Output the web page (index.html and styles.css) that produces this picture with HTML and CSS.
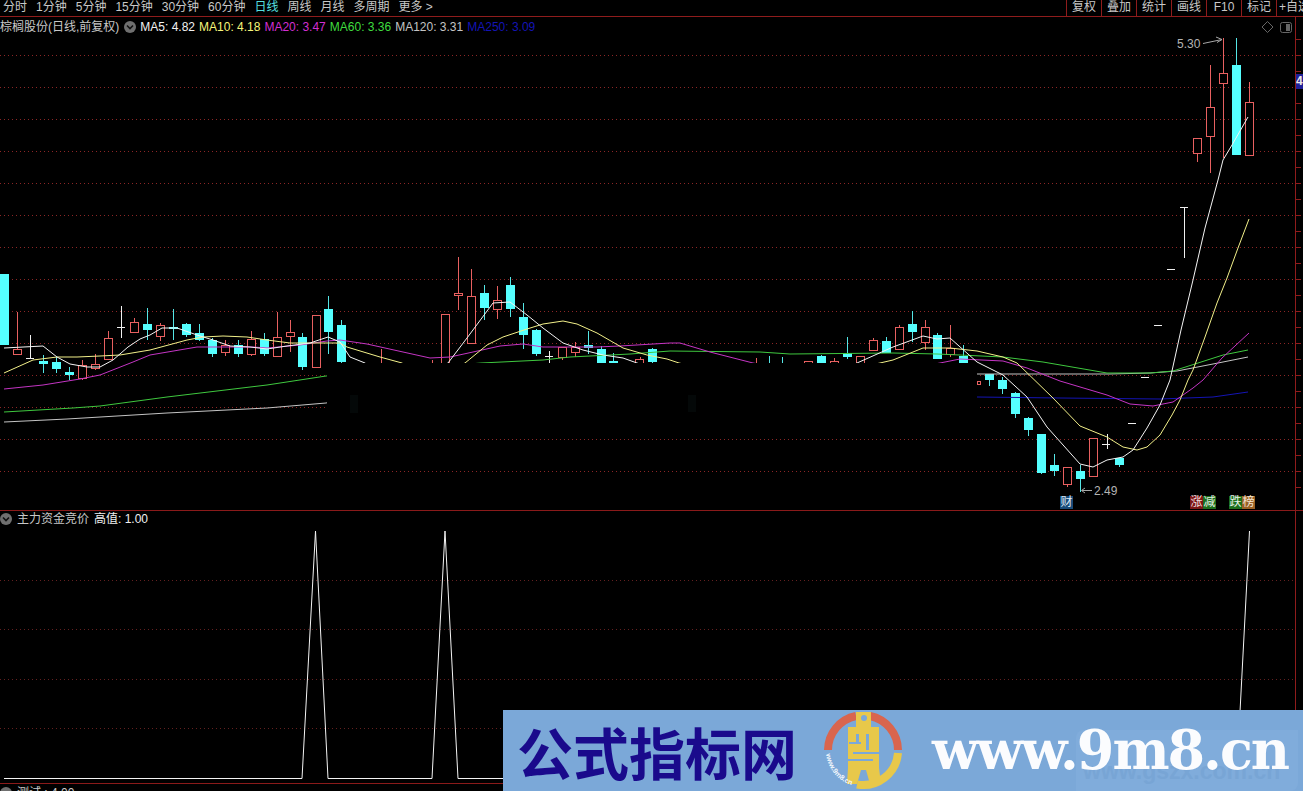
FILE: index.html
```html
<!DOCTYPE html>
<html lang="zh">
<head>
<meta charset="utf-8">
<title>棕榈股份</title>
<link rel="stylesheet" href="styles.css">
</head>
<body>
<div class="screen">
  <header class="toolbar">
    <nav class="periods">
      <span>分时</span><span>1分钟</span><span>5分钟</span><span>15分钟</span><span>30分钟</span><span>60分钟</span>
      <span class="active">日线</span><span>周线</span><span>月线</span><span>多周期</span><span class="more">更多 &gt;</span>
    </nav>
    <nav class="tools">
      <span>复权</span><span>叠加</span><span>统计</span><span>画线</span><span>F10</span><span>标记</span><span class="last">+自选</span>
    </nav>
  </header>
  <main class="chart">
    <svg class="plot" width="1303" height="774" viewBox="0 17 1303 774">
      <path class="grid" d="M0 55.5H1295M0 87.5H1295M0 119.5H1295M0 151.5H1295M0 183.5H1295M0 215.5H1295M0 247.5H1295M0 279.5H1295M0 311.5H1295M0 343.5H1295M0 375.5H1295M0 407.5H1295M0 439.5H1295M0 471.5H1295"/>
      <path class="grid grid-sub" d="M0 580.5H1295M0 629.5H1295M0 679.5H1295M0 728.5H1295"/>
      <path class="axis" d="M1295.5 17V783M1296 39.5h5M1296 55.5h5M1296 71.5h5M1296 87.5h5M1296 103.5h5M1296 119.5h5M1296 135.5h5M1296 151.5h5M1296 167.5h5M1296 183.5h5M1296 199.5h5M1296 215.5h5M1296 231.5h5M1296 247.5h5M1296 263.5h5M1296 279.5h5M1296 295.5h5M1296 311.5h5M1296 327.5h5M1296 343.5h5M1296 359.5h5M1296 375.5h5M1296 391.5h5M1296 407.5h5M1296 423.5h5M1296 439.5h5M1296 455.5h5M1296 471.5h5M1296 487.5h5"/>
      <path class="divider" d="M0 510.5H1303M0 783.5H1303"/>

      <path class="wick-red" d="M17.5 312V354M82.5 360V380M95.5 354V370M108.5 331V360M134.5 318V333M160.5 323V341M225.5 340V356M251.5 331V356M277.5 312V357M290.5 320V352M381.5 349V363M432.5 360V363M458.5 257V310M471.5 269V296M497.5 286V319M562.5 357V360M575.5 342V357M640.5 357V360M756.5 358V363M834.5 358V363M873.5 338V340M899.5 325V327M925.5 320V350M950.5 325V357M1067.5 484V487M1093.5 476V477M1197.5 153V162M1210.5 65V173M1223.5 38V158M1249.5 82V102"/>
      <path class="body-red" d="M13.5 349.5h8v5h-8zM78.5 365.5h8v13h-8zM91.5 364.5h8v4h-8zM104.5 338.5h8v21h-8zM130.5 322.5h8v10h-8zM156.5 325.5h8v11h-8zM221.5 345.5h8v7h-8zM247.5 339.5h8v15h-8zM273.5 337.5h8v19h-8zM286.5 332.5h8v4h-8zM312.5 315.5h8v52h-8zM441.5 314.5h8v49h-8zM454.5 293.5h8v2h-8zM467.5 296.5h8v47h-8zM493.5 300.5h8v9h-8zM558.5 347.5h8v10h-8zM571.5 347.5h8v5h-8zM635.5 359.5h8v5h-8zM804.5 361.5h8v3h-8zM830.5 361.5h8v3h-8zM856.5 356.5h8v8h-8zM869.5 340.5h8v10h-8zM895.5 327.5h8v22h-8zM921.5 327.5h8v15h-8zM946.5 348.5h8v6h-8zM977.5 381.5h3v3h-3zM1063.5 467.5h8v17h-8zM1089.5 438.5h8v38h-8zM1193.5 138.5h8v15h-8zM1206.5 107.5h8v29h-8zM1219.5 73.5h8v10h-8zM1245.5 102.5h8v53h-8z"/>
      <path class="wick-cyan" d="M43.5 355V373M56.5 357V373M69.5 367V380M147.5 308V340M173.5 309V340M186.5 323V337M199.5 324V341M212.5 338V357M238.5 340V357M264.5 333V356M302.5 333V370M328.5 296V354M341.5 320V363M484.5 285V320M510.5 277V317M523.5 303V349M536.5 329V356M588.5 331V354M601.5 346V363M613.5 353V363M652.5 348V363M769.5 356V363M782.5 357V363M821.5 355V363M847.5 337V359M886.5 337V353M912.5 311V342M937.5 333V359M963.5 345V363M989.5 374V386M1002.5 377V394M1015.5 392V418M1028.5 417V436M1041.5 434V474M1054.5 454V476M1080.5 465V492M1119.5 458V467M1236.5 38V65"/>
      <path class="body-cyan" d="M0 274h9v71h-9zM39 361h9v3h-9zM52 362h9v7h-9zM65 372h9v3h-9zM143 324h9v6h-9zM169 327h9v2h-9zM182 324h9v11h-9zM195 333h9v7h-9zM208 340h9v14h-9zM234 345h9v9h-9zM260 339h9v15h-9zM298 337h9v30h-9zM324 309h9v23h-9zM337 325h9v37h-9zM480 293h9v15h-9zM506 285h9v24h-9zM519 317h9v18h-9zM532 330h9v24h-9zM584 345h9v3h-9zM597 349h9v14h-9zM609 361h9v2h-9zM648 349h9v13h-9zM817 356h9v7h-9zM843 353h9v4h-9zM882 341h9v12h-9zM908 324h9v8h-9zM933 335h9v24h-9zM959 356h9v7h-9zM985 374h9v6h-9zM998 380h9v9h-9zM1011 393h9v21h-9zM1024 418h9v12h-9zM1037 434h9v39h-9zM1050 465h9v6h-9zM1076 471h9v8h-9zM1115 458h9v7h-9zM1232 65h9v90h-9z"/>
      <path class="doji" d="M30.5 335V358M26 358.5h8M121.5 306V338M117 327.5h8M549.5 351V363M545 356.5h8M1107.5 434V449M1102 444.5h8M1128 423.5h8M1141 377.5h8M1154 325.5h8M1167 269.5h8M1184.5 207V258M1180 207.5h8"/>

      <polyline class="ma ma120" points="4,422 67,419 167,413 267,408 326,403 400,390 977,374 1073,374 1110,374 1150,373 1177,371 1213,364 1248,357"/>
      <polyline class="ma ma60" points="4,412 73,408 100,406 167,397 217,391 267,385 326,376 400,370 481,363 543,360 570,357 630,354 670,351 760,352 790,354 893,353 937,354 960,355 1003,357 1043,362 1107,373 1150,373 1173,371 1223,355 1248,350"/>
      <polyline class="ma ma250" points="977,397 1060,398 1160,399 1213,397 1248,392"/>
      <polyline class="ma ma20" points="4,389 43,385 80,379 100,375 133,362 150,355 197,347 253,347 267,348 300,345 327,341 340,340 367,344 430,358 450,357 473,352 500,346 523,344 543,347 597,347 620,346 670,343 680,343 710,352 753,363 850,380 940,363 960,359 1003,361 1027,368 1060,381 1107,395 1130,404 1153,406 1173,402 1193,388 1203,380 1222,358 1249,333"/>
      <polyline class="ma ma10" points="4,373 33,360 57,357 77,357 100,356 120,355 150,350 187,340 203,337 223,336 247,337 267,340 290,343 310,343 340,343 347,347 380,357 402,363 430,380 465,363 487,345 503,337 527,329 543,324 563,321 577,324 597,333 623,348 647,355 667,359 679,363 780,385 880,363 893,360 923,348 950,348 977,351 1003,357 1017,363 1053,398 1080,426 1107,437 1123,447 1137,450 1147,447 1160,435 1172,415 1180,400 1188,380 1193,370 1205,337 1217,303 1227,278 1238,248 1249,219"/>
      <polyline class="ma ma5" points="4,348 43,346 57,357 70,364 87,367 100,367 113,360 128,347 140,339 150,335 162,328 177,328 197,335 213,340 230,346 250,347 267,349 287,346 310,343 328,337 340,342 350,357 365,363 400,390 448,363 467,338 493,303 510,302 527,315 543,328 563,343 583,350 603,355 623,358 637,363 750,400 857,363 893,347 923,336 937,339 950,338 977,362 1003,375 1027,397 1047,427 1080,464 1093,467 1107,460 1123,457 1133,450 1147,428 1160,405 1170,380 1181,330 1193,280 1205,228 1218,180 1223,160 1232,145 1248,117"/>

      <rect class="mask" x="327" y="363" width="650" height="65"/>
      <rect class="ghost" x="350" y="395" width="8" height="18"/>
      <rect class="ghost" x="688" y="395" width="8" height="17"/>

      <polyline class="signal" points="4,778.5 302,778.5 315.5,531 328,778.5 432,778.5 445,531 458,778.5 1236.5,778.5 1249.5,531"/>

      <path class="note" d="M1203 43.5L1222 39.5M1216 37L1222 39.5L1217 42.5M1092 490.5H1082M1085 488L1081.5 490.5L1085 493"/>
      <text class="note-text" x="1177" y="48">5.30</text>
      <text class="note-text" x="1094" y="495">2.49</text>

      <path class="tool-icon" d="M1267.5 21.5L1273 27L1267.5 32.5L1262 27Z"/>
      <rect class="tool-icon" x="1280.5" y="22.5" width="11" height="10" rx="2"/>
      <rect class="tool-fill" x="1286" y="24" width="4" height="7"/>
    </svg>

    <div class="legend legend-main">
      <span class="name">棕榈股份(日线,前复权)</span>
      <svg class="toggle" width="12" height="12" viewBox="0 0 12 12"><circle cx="6" cy="6" r="6" fill="#6f6f6f"/><path d="M3 4.5L6 7.5L9 4.5" fill="none" stroke="#111" stroke-width="1.6"/></svg>
      <span class="v5">MA5: 4.82</span>
      <span class="v10">MA10: 4.18</span>
      <span class="v20">MA20: 3.47</span>
      <span class="v60">MA60: 3.36</span>
      <span class="v120">MA120: 3.31</span>
      <span class="v250">MA250: 3.09</span>
    </div>

    <div class="price-tag">4</div>

    <span class="flag flag-cai">财</span>
    <div class="flags flags-mid"><span class="flag-red">涨</span><span class="flag-green">减</span></div>
    <div class="flags flags-right"><span class="flag-green">跌</span><span class="flag-brown">榜</span></div>

    <div class="legend legend-sub">
      <svg class="toggle" width="12" height="12" viewBox="0 0 12 12"><circle cx="6" cy="6" r="6" fill="#6f6f6f"/><path d="M3 4.5L6 7.5L9 4.5" fill="none" stroke="#111" stroke-width="1.6"/></svg>
      <span class="name">主力资金竞价</span>
      <span class="bright">高值: 1.00</span>
    </div>

    <div class="legend legend-last">
      <svg class="toggle" width="12" height="12" viewBox="0 0 12 12"><circle cx="6" cy="6" r="6" fill="#6f6f6f"/></svg>
      <span class="name">测试 : 4.00</span>
    </div>

    <aside class="watermark">
      <span class="wm-title">公式指标网</span>
      <svg class="wm-logo" width="80" height="81" viewBox="0 0 80 81">
        <path class="arc-red" d="M5 40A35 35 0 0 1 33 6M47 6A35 35 0 0 1 75 40"/>
        <path class="arc-yellow" d="M75 43A35 35 0 0 1 34 74.5"/>
        <path class="coin" d="M33 2H48V17H56V58L58 74H47L43 60H38L34 74H24L25 58V17H33Z"/>
        <circle class="coin-hole" cx="41" cy="8" r="3"/>
        <path class="coin-cut" d="M26 32H38V34H26ZM43 24H46V40H43ZM33 24H36V32H33ZM30 42H56V44H30ZM25 49H50V51H25Z"/>
        <path id="wm-ring" class="ring" d="M3 44A37 37 0 0 0 32 76"/>
        <text class="ring-text"><textPath href="#wm-ring">www.9m8.cn</textPath></text>
      </svg>
      <span class="wm-url-wrap">
        <span class="wm-ghost">www.gszx.com.cn</span>
        <span class="wm-url">www.9m8.cn</span>
      </span>
    </aside>
  </main>
</div>
</body>
</html>
```
FILE: styles.css
```css
* { box-sizing: border-box; }
html, body { margin: 0; padding: 0; background: #000; }
body {
  width: 1303px;
  height: 791px;
  overflow: hidden;
  font: 12px/14px "Liberation Sans", "Noto Sans CJK SC", sans-serif;
  color: #c8c8c8;
}
.screen { display: flex; flex-direction: column; height: 791px; }

.toolbar {
  flex: none;
  height: 17px;
  display: flex;
  justify-content: space-between;
  border-bottom: 1px solid #8f1c1c;
}
.periods { display: flex; gap: 9px; padding-left: 3px; line-height: 15px; white-space: nowrap; }
.periods .active { color: #55e0e0; }
.tools { display: flex; width: 237px; flex: none; overflow: hidden; line-height: 15px; }
.tools span {
  flex: none;
  width: 35px;
  text-align: center;
  border-left: 1px solid #8f1c1c;
  white-space: nowrap;
}
.tools .last { width: 30px; text-align: left; padding-left: 2px; }

.chart { position: relative; flex: 1; }
.plot { display: block; }

.grid { stroke: #8c2626; stroke-width: 1; stroke-dasharray: 1 3; fill: none; }
.grid-sub { stroke: #642020; }
.axis { stroke: #8f1c1c; stroke-width: 1; fill: none; }
.divider { stroke: #8a1a1a; stroke-width: 1; fill: none; }
.wick-red { stroke: #e86060; stroke-width: 1; fill: none; shape-rendering: crispEdges; }
.body-red { stroke: #e86060; stroke-width: 1; fill: #000; shape-rendering: crispEdges; }
.wick-cyan { stroke: #55e6e6; stroke-width: 1; fill: none; shape-rendering: crispEdges; }
.body-cyan { fill: #55ffff; shape-rendering: crispEdges; }
.doji { stroke: #f0f0f0; stroke-width: 1; fill: none; shape-rendering: crispEdges; }
.ma { fill: none; stroke-width: 1; stroke-linejoin: round; }
.ma5 { stroke: #f4f4f4; }
.ma10 { stroke: #f2f08a; }
.ma20 { stroke: #c435c4; }
.ma60 { stroke: #3fc83f; }
.ma120 { stroke: #c4c4c4; }
.ma250 { stroke: #1414b4; }
.mask { fill: #000; }
.ghost { fill: #040808; }
.signal { fill: none; stroke: #f4f4f4; stroke-width: 1; }
.note { fill: none; stroke: #a8a8a8; stroke-width: 1; }
.note-text { fill: #b4b4b4; font-size: 12px; }
.tool-icon { fill: none; stroke: #666; stroke-width: 1; }
.tool-fill { fill: #666; }

.legend { position: absolute; display: flex; align-items: center; white-space: nowrap; }
.legend-main { left: 0; top: 3px; }
.legend-main .toggle { margin: 0 4px 0 5px; }
.legend-main span + span { margin-left: 4px; }
.legend-main .toggle + span { margin-left: 0; }
.v5 { color: #f2f2f2; }
.v10 { color: #f5f57a; }
.v20 { color: #d22fd2; }
.v60 { color: #3fdc3f; }
.v120 { color: #c4c4c4; }
.v250 { color: #1414b4; }

.price-tag {
  position: absolute;
  left: 1296px;
  top: 57px;
  width: 7px;
  height: 15px;
  overflow: hidden;
  background: #20209a;
  color: #e8e8e8;
  font-weight: bold;
  line-height: 15px;
}

.flag, .flags span {
  display: block;
  width: 13px;
  height: 13px;
  font-size: 12px;
  line-height: 13px;
  text-align: center;
}
.flag { position: absolute; }
.flags { position: absolute; display: flex; }
.flag-cai { left: 1060px; top: 479px; background: #184a78; color: #dfe8f2; }
.flags-mid { left: 1190px; top: 479px; }
.flags-right { left: 1229px; top: 479px; }
.flag-red { background: #7c1616; color: #f0dede; }
.flag-green { background: #1c6e1c; color: #e4f0e4; }
.flag-brown { background: #9a6024; color: #f4e6d4; }

.legend-sub { left: 0; top: 495px; gap: 5px; }
.legend-sub .bright { color: #f0f0f0; }
.legend-last { left: 0; top: 769px; gap: 5px; }

.watermark {
  position: absolute;
  left: 503px;
  top: 693px;
  width: 800px;
  height: 81px;
  display: flex;
  align-items: center;
  padding-left: 14px;
  background: #7ba8d8;
  overflow: hidden;
}
.wm-title {
  flex: none;
  width: 278px;
  font: bold 56px/81px "Noto Sans CJK SC", sans-serif;
  color: #1a0a8c;
  white-space: nowrap;
}
.wm-logo { flex: none; margin-left: 28px; display: block; }
.arc-red { fill: none; stroke: #d9654e; stroke-width: 8; }
.arc-yellow { fill: none; stroke: #e8c84a; stroke-width: 8; }
.coin { fill: #e8c84a; }
.coin-hole { fill: #7ba8d8; }
.coin-cut { fill: #7ba8d8; }
.ring { fill: none; stroke: none; }
.ring-text { fill: #f2f6fb; font: bold 7px "Liberation Sans", sans-serif; }
.wm-url-wrap { position: relative; flex: none; margin-left: 29px; display: block; }
.wm-url {
  position: relative;
  display: block;
  font: bold 54px/81px "DejaVu Serif", serif;
  letter-spacing: -2px;
  color: #fbfcfe;
  white-space: nowrap;
}
.wm-ghost {
  position: absolute;
  left: 144px;
  top: 20px;
  width: 222px;
  height: 61px;
  padding: 28px 0 0 7px;
  border-radius: 8px 0 8px 0;
  background: #80acdb;
  color: #78a5d5;
  font: bold 23px/26px "Liberation Sans", sans-serif;
  white-space: nowrap;
  overflow: hidden;
}
```
